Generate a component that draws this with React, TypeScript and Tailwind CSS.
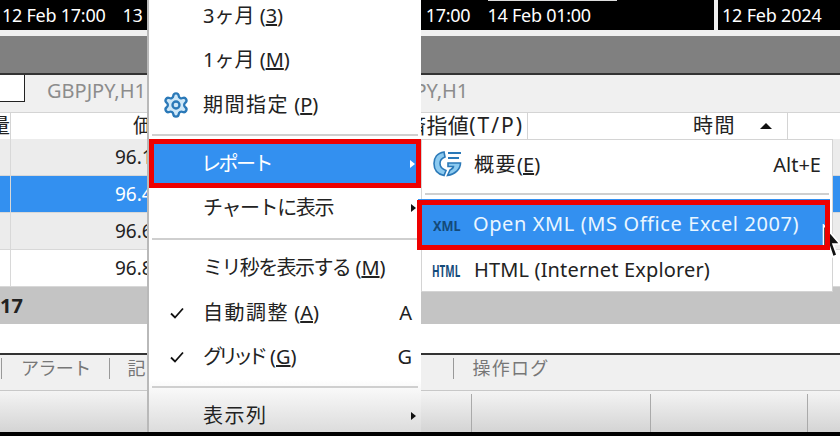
import { Settings } from 'lucide-react';

const FONT = "font-['Noto_Sans','Noto_Sans_CJK_JP',sans-serif]";

const ROWS = [
  { price: '96.1', cls: 'bg-[#ececec] text-[#222]' },
  { price: '96.4', cls: 'bg-[#3390f0] text-white' },
  { price: '96.6', cls: 'bg-[#ececec] text-[#222]' },
  { price: '96.8', cls: 'bg-white text-[#222]' },
];

function MenuItem({ label, right, arrow, check, icon }: { label: React.ReactNode; right?: string; arrow?: boolean; check?: boolean; icon?: React.ReactNode }) {
  return (
    <div className="relative flex h-[44px] items-center pl-[54px] pr-[9px] text-[20px] text-[#222]">
      {icon}
      {check && (
        <svg className="absolute left-[21px] top-[15px]" width="14" height="14" viewBox="0 0 14 14" fill="none" stroke="#111" strokeWidth="1.8">
          <path d="M1 7.5 L5 11.5 L13 2.5" />
        </svg>
      )}
      <span className="flex-1 whitespace-nowrap">{label}</span>
      {right && <span>{right}</span>}
      {arrow && <span className="-mr-[4px] h-0 w-0 border-y-[4px] border-l-[5px] border-y-transparent border-l-[#111]" />}
    </div>
  );
}

function Separator({ className }: { className: string }) {
  return <div className={`mx-[3px] h-[2px] bg-[#cfcfcf] ${className}`} />;
}

function ReportMenu() {
  return (
    <div className="absolute left-[147px] top-[-6px] h-[438px] w-[274px] overflow-hidden border-l-2 border-[#b9b9b9] bg-gradient-to-b from-white from-[88%] to-[#dcdcdc]">
      <MenuItem label={<>3ヶ月 (<u>3</u>)</>} />
      <MenuItem label={<>1ヶ月 (<u>M</u>)</>} />
      <div className="mt-[1px]">
        <MenuItem
          label={<><span className="tracking-[1.5px]">期間指定</span> (<u>P</u>)</>}
          icon={
            <span className="absolute left-[13px] top-[8px]">
              <Settings size={28} strokeWidth={2} stroke="#2b79b8" fill="#cfe8f8" />
            </span>
          }
        />
      </div>
      <Separator className="mt-[7px]" />
      <div className="mt-[3px] flex h-[49px] items-center border-[5px] border-[#ee0000] bg-[#3390f0] pl-[47px] pr-[1px] text-[20px] text-white">
        <span className="flex-1 tracking-[-2.5px]">レポート</span>
        <span className="h-0 w-0 border-y-[4px] border-l-[5px] border-y-transparent border-l-white" />
      </div>
      <div className="-mt-[2px]">
        <MenuItem label={<span className="tracking-[-1.4px]">チャートに表示</span>} arrow />
      </div>
      <Separator className="mt-[8px]" />
      <div className="mb-[1px] mt-[6px]">
        <MenuItem label={<><span className="tracking-[-1.6px]">ミリ秒を表示する</span> (<u>M</u>)</>} />
      </div>
      <MenuItem label={<><span className="tracking-[1.5px]">自動調整</span> (<u>A</u>)</>} right="A" check />
      <MenuItem label={<><span className="tracking-[-5px]">グリッド</span><span className="ml-[7px]">(<u>G</u>)</span></>} right="G" check />
      <Separator className="mt-[7px]" />
      <div className="mt-[6px]">
        <MenuItem label={<span className="tracking-[1.5px]">表示列</span>} arrow />
      </div>
    </div>
  );
}

function ExportMenu() {
  return (
    <div className="absolute left-[421px] top-[139px] flex h-[153px] w-[412px] flex-col border border-[#d4d4d4] bg-white text-[#222]">
      <div className="flex h-[50px] items-center pl-[52px] pr-[11px] text-[20px]">
        <svg className="absolute left-[11px] top-[11px]" width="29" height="26" viewBox="0 0 29 26" fill="none" stroke="#2b79b8" strokeWidth="1.6">
          <path d="M11 1 C4 2 1 7 1 12.5 C1 18 4 23 11 24.5 L13 19.5 C9 18 7 15.5 7 12.5 C7 9.5 9 7 12 6 Z" fill="#8ccaf0" />
          <path d="M15 2 H28 M15 7 H26" strokeWidth="2" />
          <path d="M15 12 H27.5 C27.5 18 22 23.5 14.5 24.5 L17 19 C19 18 20.5 16 20.5 15.5 H15 Z" fill="#8ccaf0" />
        </svg>
        <span className="flex-1"><span className="tracking-[1.5px]">概要</span>(<u>E</u>)</span>
        <span>Alt+E</span>
      </div>
      <Separator className="mt-[3px]" />
      <div className="relative ml-[-4px] mt-[4px] flex h-[50px] w-[412px] items-center bg-[#3390f0] pl-[55px] text-[20px] tracking-[0.6px] text-[#eaf6ff]">
        <span className="absolute left-[15px] top-[15px] origin-left scale-x-[0.85] text-[15px] font-bold tracking-normal text-[#134a7a]">XML</span>
        Open XML (MS Office Excel 2007)
      </div>
      <div className="relative flex h-[42px] items-center pl-[52px] text-[20px] tracking-[0.15px]">
        <span className="absolute left-[10px] top-[10px] origin-left scale-x-[0.62] text-[16px] font-bold tracking-normal text-[#134a7a]">HTML</span>
        HTML (Internet Explorer)
      </div>
    </div>
  );
}

export default function App() {
  return (
    <div className={`relative flex h-[436px] w-[840px] flex-col overflow-hidden bg-white ${FONT}`}>
      {/* ticker */}
      <div className="relative flex h-[36px] bg-[#f0f0f0]">
        <div className="flex h-[30px] w-[714px] items-center gap-[17px] bg-black pl-[2px] text-[18px] tracking-[-0.25px] text-white">
          <span className="whitespace-nowrap">12 Feb 17:00</span>
          <span className="whitespace-nowrap">13</span>
          <span className="ml-[266px] whitespace-nowrap">17:00</span>
          <span className="whitespace-nowrap">14 Feb 01:00</span>
        </div>
        <div className="ml-[4px] flex h-[30px] flex-1 items-center bg-black pl-[4px] text-[18px] tracking-[-0.2px] text-white">12 Feb 2024</div>
        <div className="absolute left-[488px] top-0 h-px w-[129px] bg-[#ddd]" />
      </div>
      <div className="h-[37px] bg-[#808080]" />
      <div className="h-[2px] bg-[#333]" />

      {/* symbol tabs */}
      <div className="flex h-[37px] bg-[#f0f0f0] text-[20px] text-[#8c8c8c]">
        <div className="h-[27px] w-[25px] border-b border-r border-[#222] bg-white" />
        <div className="pl-[22px] pt-[1px]">GBPJPY,H1</div>
        <div className="ml-[263px] pt-[1px]">JPY,H1</div>
      </div>

      {/* orders table */}
      <div className="flex h-[27px] items-center border-t border-[#d4d4d4] bg-white text-[20px] text-[#222]">
        <div className="flex h-full w-[11px] items-center justify-end overflow-hidden border-r border-[#d4d4d4]">
          <span className="shrink-0">量</span>
        </div>
        <div className="flex h-full w-[517px] items-center border-r border-[#d4d4d4] pl-[122px] pr-[3px]">
          <span className="flex-1">価</span>
          <span className="whitespace-nowrap text-[21px] tracking-[0.4px]">決済指値<span className="tracking-[2px]">(T/P)</span></span>
        </div>
        <div className="flex h-full w-[260px] items-center justify-end gap-[24px] border-r border-[#d4d4d4] pr-[15px]">
          <span className="tracking-[1.5px]">時間</span>
          <span className="h-0 w-0 border-x-[6px] border-b-[6px] border-x-transparent border-b-[#111]" />
        </div>
      </div>
      {ROWS.map((row) => (
        <div key={row.price} className={`flex h-[37px] items-center border-b border-[#d8d8d8] text-[19px] ${row.cls}`}>
          <div className="h-full w-[11px] border-r border-[#d8d8d8]" />
          <span className="ml-[104px]">{row.price}</span>
        </div>
      ))}
      <div className="flex h-[37px] items-center bg-[#c4c4c4] text-[20px] font-bold text-[#222]">17</div>
      <div className="h-[29px] bg-white" />

      {/* terminal tabs */}
      <div className="flex h-[37px] items-center border-t-2 border-[#333] bg-[#f0f0f0] pb-[8px] text-[18px] text-[#777]">
        <span className="ml-[1px] h-[21px] w-px bg-[#999]" />
        <span className="ml-[19px] tracking-[-0.6px]">アラート</span>
        <span className="ml-[18px] h-[21px] w-px bg-[#999]" />
        <span className="ml-[18px]">記</span>
        <span className="ml-[307px] h-[21px] w-px bg-[#999]" />
        <span className="ml-[19px] tracking-[1.2px]">操作ログ</span>
      </div>

      {/* status bar */}
      <div className="flex h-[42px] border-t border-[#c8c8c8] bg-gradient-to-b from-[#f4f4f4] to-[#d4d4d4] pt-[3px]">
        <div className="h-full w-[472px] border-r border-[#aaa]" />
        <div className="h-full w-[179px] border-r border-[#aaa]" />
        <div className="h-full w-[157px] border-r border-[#aaa]" />
      </div>
      <div className="h-[4px] bg-black" />

      <ReportMenu />
      <ExportMenu />

      {/* mouse pointer, below the red marker */}
      <svg className="absolute left-[822px] top-[224px]" width="18" height="36" viewBox="0 0 18 36">
        <path d="M1.5 1 V27 L7 21 L11 33 L15 31 L11 20 L18 20 Z" fill="#111" stroke="#fff" strokeWidth="1.6" />
      </svg>
      <div className="absolute left-[417px] top-[200px] h-[50px] w-[413px] border-[5px] border-[#ee0000]" />
      <div className="absolute bottom-0 left-0 h-[4px] w-full bg-black" />
    </div>
  );
}
